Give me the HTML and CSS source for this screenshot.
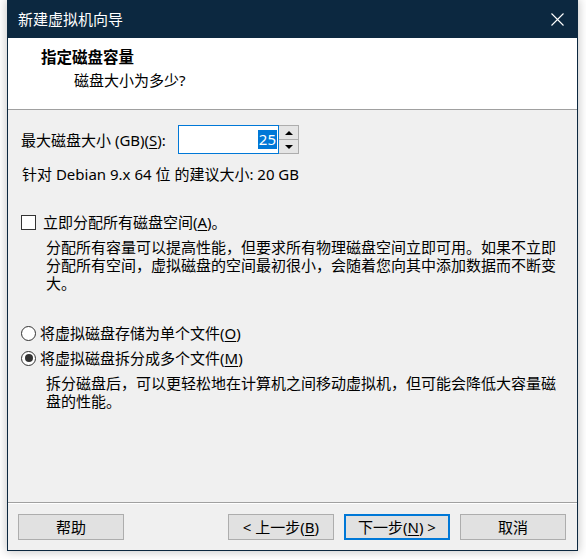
FILE: index.html
```html
<!DOCTYPE html>
<html lang="zh-CN">
<head>
<meta charset="utf-8">
<title>新建虚拟机向导</title>
<link rel="stylesheet" href="styles.css">
</head>
<body>
<div class="window">
  <div class="titlebar">
    <span class="title">新建虚拟机向导</span>
    <svg class="close" width="13" height="13" viewBox="0 0 13 13"><path d="M0.5 0.5 L12.5 12.5 M12.5 0.5 L0.5 12.5" stroke="#fff" stroke-width="1.1" fill="none"/></svg>
  </div>
  <div class="header">
    <div class="h-title">指定磁盘容量</div>
    <div class="h-sub">磁盘大小为多少?</div>
  </div>
  <div class="content">
    <div class="spin-row">
      <span class="spin-label">最大磁盘大小 (GB)(<u>S</u>):</span>
      <div class="spin-input"><span class="sel">25</span></div>
      <div class="spin-btns">
        <div class="spin-btn"><span class="tri-up"></span></div>
        <div class="spin-btn"><span class="tri-down"></span></div>
      </div>
    </div>
    <div class="hint">针对 Debian 9.x 64 位 的建议大小: 20 GB</div>
    <div class="check-row">
      <span class="checkbox"></span>
      <span>立即分配所有磁盘空间(<u>A</u>)。</span>
    </div>
    <p class="desc">分配所有容量可以提高性能，但要求所有物理磁盘空间立即可用。如果不立即分配所有空间，虚拟磁盘的空间最初很小，会随着您向其中添加数据而不断变大。</p>
    <div class="radio-row first">
      <span class="radio"></span>
      <span>将虚拟磁盘存储为单个文件(<u>O</u>)</span>
    </div>
    <div class="radio-row second">
      <span class="radio checked"></span>
      <span>将虚拟磁盘拆分成多个文件(<u>M</u>)</span>
    </div>
    <p class="desc desc2">拆分磁盘后，可以更轻松地在计算机之间移动虚拟机，但可能会降低大容量磁盘的性能。</p>
  </div>
  <div class="footer">
    <div class="sep"></div>
    <div class="buttons">
      <div class="btn">帮助</div>
      <div class="btn back">&lt; 上一步(<u>B</u>)</div>
      <div class="btn primary">下一步(<u>N</u>) &gt;</div>
      <div class="btn">取消</div>
    </div>
  </div>
</div>
</body>
</html>
```

FILE: styles.css
```css
html, body {
  margin: 0;
  padding: 0;
  background: #ffffff;
}
body {
  width: 586px;
  height: 559px;
  overflow: hidden;
  font-family: "Noto Sans", "Noto Sans CJK SC", sans-serif;
  font-size: 15px;
  color: #000;
}
.window {
  margin-left: 7px;
  width: 571px;
  height: 551px;
  box-sizing: border-box;
  border: 1px solid #0c2840;
  border-top: none;
  background: #f0f0f0;
  display: flex;
  flex-direction: column;
  box-shadow: 0 0 9px 1px rgba(0, 0, 0, 0.22);
}
.titlebar {
  height: 38px;
  flex: none;
  background: #0c2840;
  color: #fff;
  display: flex;
  align-items: center;
  justify-content: space-between;
  padding: 0 13px 0 10px;
  line-height: 20px;
}
.close {
  display: block;
}
.header {
  height: 62px;
  flex: none;
  background: #fff;
  border-bottom: 1px solid #a0a0a0;
  padding: 9px 0 0 33px;
}
.h-title {
  font-weight: bold;
  line-height: 20px;
  font-size: 15.5px;
}
.h-sub {
  margin-top: 3px;
  margin-left: 33px;
  line-height: 20px;
}
.content {
  flex: 1;
  display: flex;
  flex-direction: column;
  padding: 15px 0 0 13px;
}
.spin-row {
  display: flex;
  align-items: center;
  height: 29px;
}
.spin-label {
  width: 157px;
  line-height: 20px;
  white-space: nowrap;
}
.spin-input {
  width: 101px;
  height: 29px;
  box-sizing: border-box;
  border: 1px solid #0078d7;
  background: #fff;
  display: flex;
  align-items: center;
  justify-content: flex-end;
  padding-right: 1px;
}
.sel {
  background: #0078d7;
  color: #fff;
  line-height: 19px;
  padding: 0 1px;
}
.spin-btns {
  width: 20px;
  height: 29px;
  box-sizing: border-box;
  border: 1px solid #adadad;
  border-left: none;
  display: flex;
  flex-direction: column;
}
.spin-btn {
  flex: 1;
  background: #e5e5e5;
  display: flex;
  align-items: center;
  justify-content: center;
}
.spin-btn + .spin-btn {
  border-top: 1px solid #adadad;
}
.tri-up {
  width: 0;
  height: 0;
  border-left: 4px solid transparent;
  border-right: 4px solid transparent;
  border-bottom: 4px solid #000;
}
.tri-down {
  width: 0;
  height: 0;
  border-left: 4px solid transparent;
  border-right: 4px solid transparent;
  border-top: 4px solid #000;
}
.hint {
  margin-top: 10px;
  line-height: 20px;
  margin-left: 1px;
}
.check-row {
  margin-top: 28px;
  height: 20px;
  display: flex;
  align-items: center;
  line-height: 20px;
}
.checkbox {
  width: 15px;
  height: 15px;
  box-sizing: border-box;
  border: 1px solid #333;
  background: #fff;
  margin-right: 7px;
}
.desc {
  margin: 6px 0 0 25px;
  width: 518px;
  line-height: 18px;
}
.radio-row {
  height: 20px;
  display: flex;
  align-items: center;
  line-height: 20px;
}
.radio-row.first {
  margin-top: 31px;
}
.radio-row.second {
  margin-top: 5px;
}
.radio {
  width: 15px;
  height: 15px;
  box-sizing: border-box;
  border: 1px solid #333;
  border-radius: 50%;
  background: #fff;
  margin-right: 4px;
  display: flex;
  align-items: center;
  justify-content: center;
}
.radio.checked::after {
  content: "";
  width: 8px;
  height: 8px;
  border-radius: 50%;
  background: #333;
}
.desc2 {
  margin-top: 6px;
}
.footer {
  flex: none;
}
.sep {
  border-top: 1px solid #a0a0a0;
  border-bottom: 1px solid #fff;
}
.buttons {
  display: flex;
  gap: 10px;
  padding: 10px 11px 10px 10px;
}
.btn {
  width: 106px;
  height: 26px;
  box-sizing: border-box;
  border: 1px solid #adadad;
  background: #e1e1e1;
  display: flex;
  align-items: center;
  justify-content: center;
  line-height: 20px;
}
.btn.back {
  margin-left: auto;
}
.btn.primary {
  border: 2px solid #0078d7;
}
u {
  text-decoration-thickness: 1px;
  text-underline-offset: 2px;
}
```
